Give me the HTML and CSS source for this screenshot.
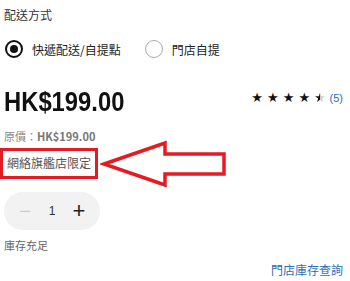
FILE: index.html
```html
<!DOCTYPE html>
<html lang="zh-Hant">
<head>
  <meta charset="UTF-8" />
  <meta name="viewport" content="width=device-width, initial-scale=1.0"/>
  <title>Product</title>
  <link rel="stylesheet" href="styles.css">
</head>
<body>

<div class="product">
  <div class="label">配送方式</div>

  <div class="delivery">
    <label class="option">
      <span class="radio checked"></span>
      快遞配送/自提點
    </label>
    <label class="option">
      <span class="radio"></span>
      門店自提
    </label>
  </div>

  <div class="price-row">
    <div class="price">HK$199.00</div>
    <div class="rating">
      <span class="stars">★ ★ ★ ★ <span class="half">★</span></span>
      <span class="count">(5)</span>
    </div>
  </div>

  <div class="orig">原價：<b>HK$199.00</b></div>

  <div class="limited">網絡旗艦店限定</div>

  <div class="qty">
    <span class="minus">−</span>
    <span class="num">1</span>
    <span class="plus">+</span>
  </div>

  <div class="stock">庫存充足</div>

  <div class="store-link">門店庫存查詢</div>

  <!-- annotation arrow -->
  <svg class="arrow" width="140" height="50" viewBox="0 0 140 50">
    <polygon points="4,24 65,3 65,14 124,14 124,34 65,34 65,45"
             fill="none" stroke="#e41b23" stroke-width="3.5" stroke-linejoin="miter"/>
  </svg>
</div>

</body>
</html>
```

FILE: styles.css
```css
* {
  box-sizing: border-box;
}

body {
  margin: 0;
  background: #fff;
  font-family: "Noto Sans CJK TC", "Liberation Sans", sans-serif;
  color: #333;
}

.product {
  position: relative;
  width: 350px;
  height: 281px;
  padding: 6px 7px 0 4px;
}

.label {
  font-size: 12px;
  line-height: 18px;
  color: #333;
}

.delivery {
  display: flex;
  align-items: center;
  gap: 23px;
  margin-top: 14px;
  height: 22px;
}

.option {
  display: flex;
  align-items: center;
  gap: 9px;
  font-size: 12px;
  color: #222;
}

.radio {
  width: 18px;
  height: 18px;
  border-radius: 50%;
  border: 1.5px solid #aaa;
  display: inline-block;
  position: relative;
  margin-left: 1px;
}

.radio.checked {
  border: 2px solid #111;
}

.radio.checked::after {
  content: "";
  position: absolute;
  left: 3px;
  top: 3px;
  width: 8px;
  height: 8px;
  border-radius: 50%;
  background: #111;
}

.price-row {
  display: flex;
  justify-content: space-between;
  align-items: flex-start;
  margin-top: 26px;
}

.price {
  font-family: "Liberation Sans", sans-serif;
  font-weight: bold;
  font-size: 28px;
  line-height: 32px;
  color: #111;
  transform: scaleX(0.85);
  transform-origin: left center;
}

.rating {
  line-height: 14px;
  margin-top: 2px;
}

.stars {
  color: #111;
  font-size: 13px;
  letter-spacing: 0;
  font-family: "DejaVu Sans", sans-serif;
}

.half {
  display: inline-block;
  background: linear-gradient(90deg, #111 50%, #ccc 50%);
  -webkit-background-clip: text;
  color: transparent;
}

.count {
  color: #2d6db5;
  font-size: 11px;
  font-family: "Liberation Sans", sans-serif;
}

.orig {
  margin-top: 10px;
  font-size: 11px;
  line-height: 16px;
  color: #888;
}

.orig b {
  color: #777;
}

.limited {
  display: inline-block;
  margin-top: 4px;
  margin-left: -4px;
  padding: 3px 4px 4px 4px;
  font-size: 12px;
  line-height: 18px;
  color: #555;
  border: 3.5px solid #e41b23;
}

.qty {
  display: flex;
  align-items: center;
  justify-content: center;
  width: 96px;
  height: 38px;
  margin-top: 13px;
  border-radius: 19px;
  background: #f2f2f2;
  font-family: "Liberation Sans", sans-serif;
}

.qty span {
  width: 27px;
  text-align: center;
}

.minus {
  color: #ccc;
  font-size: 20px;
}

.num {
  font-size: 12px;
  color: #333;
}

.plus {
  color: #222;
  font-size: 22px;
}

.stock {
  margin-top: 7px;
  font-size: 11px;
  line-height: 16px;
  color: #666;
}

.store-link {
  text-align: right;
  margin-top: 8px;
  font-size: 12px;
  line-height: 18px;
  color: #2d6db5;
}

.arrow {
  position: absolute;
  left: 100px;
  top: 140px;
}
```
